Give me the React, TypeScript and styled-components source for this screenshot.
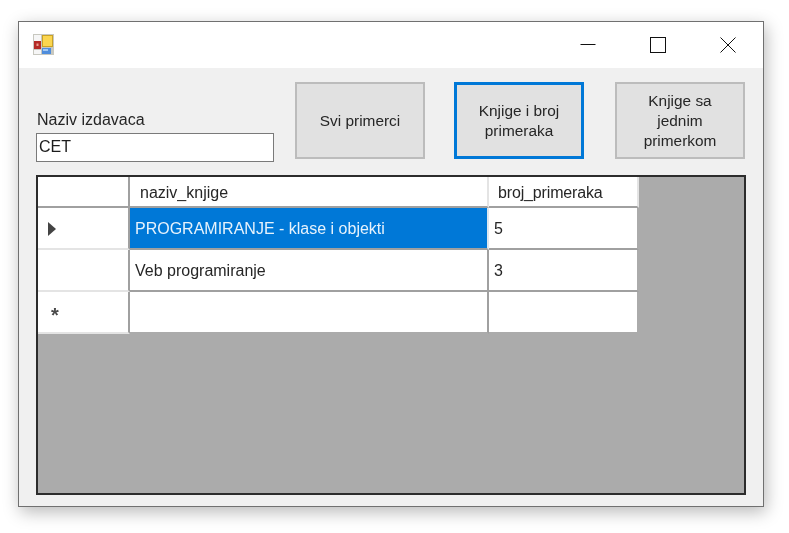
import React from 'react';
import styled, {createGlobalStyle} from 'styled-components';

const GlobalStyle = createGlobalStyle`
  html, body {
    margin: 0;
    padding: 0;
    background: #ffffff;
    font-family: "Liberation Sans", Arial, sans-serif;
  }
  * {
    box-sizing: border-box;
  }
`

const rows = [
    {marker: 'current', title: 'PROGRAMIRANJE - klase i objekti', count: '5', selected: true},
    {marker: 'none', title: 'Veb programiranje', count: '3', selected: false},
    {marker: 'new', title: '', count: '', selected: false},
]

export default function App() {
    return (
        <>
            <GlobalStyle/>
            <Page>
                <Window>
                    <TitleBar>
                        <AppIcon viewBox="0 0 21 21">
                            <rect x="0" y="0" width="21" height="21" fill="#c8c8c0"/>
                            <rect x="1" y="1" width="7" height="6" fill="#f6f6f6"/>
                            <rect x="1" y="7" width="7" height="8" fill="#b42a26"/>
                            <rect x="3.5" y="9.5" width="2" height="2.5" fill="#e9a090"/>
                            <rect x="1" y="16" width="7" height="4" fill="#f6f6f6"/>
                            <rect x="9" y="1" width="11" height="12" fill="#c9a227"/>
                            <rect x="10" y="2" width="9" height="10" fill="#fbd650"/>
                            <rect x="9" y="14" width="9" height="6" fill="#4f8ddc"/>
                            <rect x="10" y="15" width="5" height="2" fill="#a3c8f2"/>
                        </AppIcon>
                        <WindowControls>
                            <ControlButton>
                                <svg width="16" height="16" viewBox="0 0 16 16">
                                    <path d="M0.5 7.5H15.5" stroke="#111" fill="none"/>
                                </svg>
                            </ControlButton>
                            <ControlButton>
                                <svg width="16" height="16" viewBox="0 0 16 16">
                                    <rect x="0.5" y="0.5" width="15" height="15" stroke="#111" fill="none"/>
                                </svg>
                            </ControlButton>
                            <ControlButton>
                                <svg width="16" height="16" viewBox="0 0 16 16">
                                    <path d="M0.5 0.5L15.5 15.5M15.5 0.5L0.5 15.5" stroke="#111" fill="none"/>
                                </svg>
                            </ControlButton>
                        </WindowControls>
                    </TitleBar>
                    <Body>
                        <Toolbar>
                            <SearchField>
                                <FieldLabel>Naziv izdavaca</FieldLabel>
                                <TextInput>CET</TextInput>
                            </SearchField>
                            <ActionButton $left={21}>Svi primerci</ActionButton>
                            <ActionButton $left={29} $focused>Knjige i broj primeraka</ActionButton>
                            <ActionButton $left={31}>Knjige sa jednim primerkom</ActionButton>
                        </Toolbar>
                        <Grid>
                            <GridTable>
                                <HeaderRow>
                                    <RowHeader $header/>
                                    <HeaderCell $width={359}>naziv_knjige</HeaderCell>
                                    <HeaderCell $width={150} $tight>broj_primeraka</HeaderCell>
                                </HeaderRow>
                                {rows.map((row, index) => (
                                    <DataRow key={index}>
                                        <RowHeader>
                                            {row.marker === 'current' && <CurrentMarker/>}
                                            {row.marker === 'new' && <NewMarker>*</NewMarker>}
                                        </RowHeader>
                                        <Cell $width={359} $selected={row.selected} $lastRow={index === rows.length - 1}>
                                            {row.title}
                                        </Cell>
                                        <Cell $width={150} $lastColumn $lastRow={index === rows.length - 1}>
                                            {row.count}
                                        </Cell>
                                    </DataRow>
                                ))}
                            </GridTable>
                        </Grid>
                    </Body>
                </Window>
            </Page>
        </>
    );
}

const Page = styled.div`
  width: 789px;
  height: 533px;
  padding: 21px 0 0 18px;
  overflow: hidden;
`

const Window = styled.div`
  width: 746px;
  height: 486px;
  background: #f0f0f0;
  border: 1px solid #707070;
  box-shadow: 2px 5px 16px rgba(0, 0, 0, 0.28);
  display: flex;
  flex-direction: column;
  filter: blur(0.3px);
`

const TitleBar = styled.div`
  height: 46px;
  padding: 0 0 1px 14px;
  background: #ffffff;
  display: flex;
  align-items: center;
  justify-content: space-between;
`

const AppIcon = styled.svg`
  width: 21px;
  height: 21px;
`

const WindowControls = styled.div`
  display: flex;
`

const ControlButton = styled.div`
  width: 70px;
  height: 45px;
  display: flex;
  align-items: center;
  justify-content: center;
`

const Body = styled.div`
  flex: 1;
  padding: 14px 17px 11px 17px;
  display: flex;
  flex-direction: column;
  gap: 13px;
`

const Toolbar = styled.div`
  display: flex;
  align-items: flex-start;
`

const SearchField = styled.div`
  width: 238px;
  height: 80px;
  display: flex;
  flex-direction: column;
  justify-content: flex-end;
  gap: 2px;
`

const FieldLabel = styled.div`
  font-size: 16px;
  line-height: 22px;
  padding-left: 1px;
  color: #262626;
`

const TextInput = styled.div`
  height: 29px;
  background: #ffffff;
  border: 1px solid #7a7a7a;
  font-size: 16px;
  line-height: 26px;
  padding-left: 2px;
  color: #1c1c1c;
`

const ActionButton = styled.button<{ $left: number, $focused?: boolean }>`
  width: 130px;
  height: 77px;
  margin-left: ${props => props.$left}px;
  padding: 0 12px;
  background: #e1e1e1;
  border: ${props => props.$focused ? '3px solid #0078d7' : '2px solid #bcbcbc'};
  font-family: inherit;
  font-size: 15.4px;
  line-height: 20px;
  color: #262626;
`

const Grid = styled.div`
  flex: 1;
  background: #ababab;
  border: 2px solid #2c2c2c;
`

const GridTable = styled.div`
  display: flex;
  flex-direction: column;
`

const HeaderRow = styled.div`
  display: flex;
  height: 31px;
`

const DataRow = styled.div`
  display: flex;
  height: 42px;
`

const RowHeader = styled.div<{ $header?: boolean }>`
  width: 92px;
  background: #ffffff;
  border-right: 2px solid #a0a0a0;
  border-bottom: 2px solid ${props => props.$header ? '#a0a0a0' : '#e4e4e4'};
  display: flex;
  align-items: center;
  padding-left: 10px;
`

const HeaderCell = styled.div<{ $width: number, $tight?: boolean }>`
  width: ${props => props.$width}px;
  background: #ffffff;
  border-right: 2px solid #e4e4e4;
  border-bottom: 2px solid #a0a0a0;
  padding-left: ${props => props.$tight ? '9px' : '10px'};
  font-size: 16px;
  line-height: 31px;
  letter-spacing: ${props => props.$tight ? '-0.15px' : '0'};
  color: #262626;
`

const Cell = styled.div<{ $width: number, $selected?: boolean, $lastColumn?: boolean, $lastRow?: boolean }>`
  width: ${props => props.$width}px;
  background: ${props => props.$selected ? '#0078d7' : '#ffffff'};
  border-right: 2px solid ${props => props.$lastColumn ? '#ababab' : props.$selected ? '#dfe7ee' : '#a0a0a0'};
  border-bottom: 2px solid ${props => props.$lastRow ? '#ababab' : '#a0a0a0'};
  padding-left: 5px;
  font-size: 16px;
  line-height: 42px;
  color: ${props => props.$selected ? '#e6f2fc' : '#262626'};
`

const CurrentMarker = styled.span`
  width: 0;
  height: 0;
  margin-top: 2px;
  border-top: 7px solid transparent;
  border-bottom: 7px solid transparent;
  border-left: 8px solid #444444;
`

const NewMarker = styled.span`
  font-size: 20px;
  font-weight: bold;
  line-height: 20px;
  margin-top: 5px;
  margin-left: 3px;
  color: #4a4a4a;
`
